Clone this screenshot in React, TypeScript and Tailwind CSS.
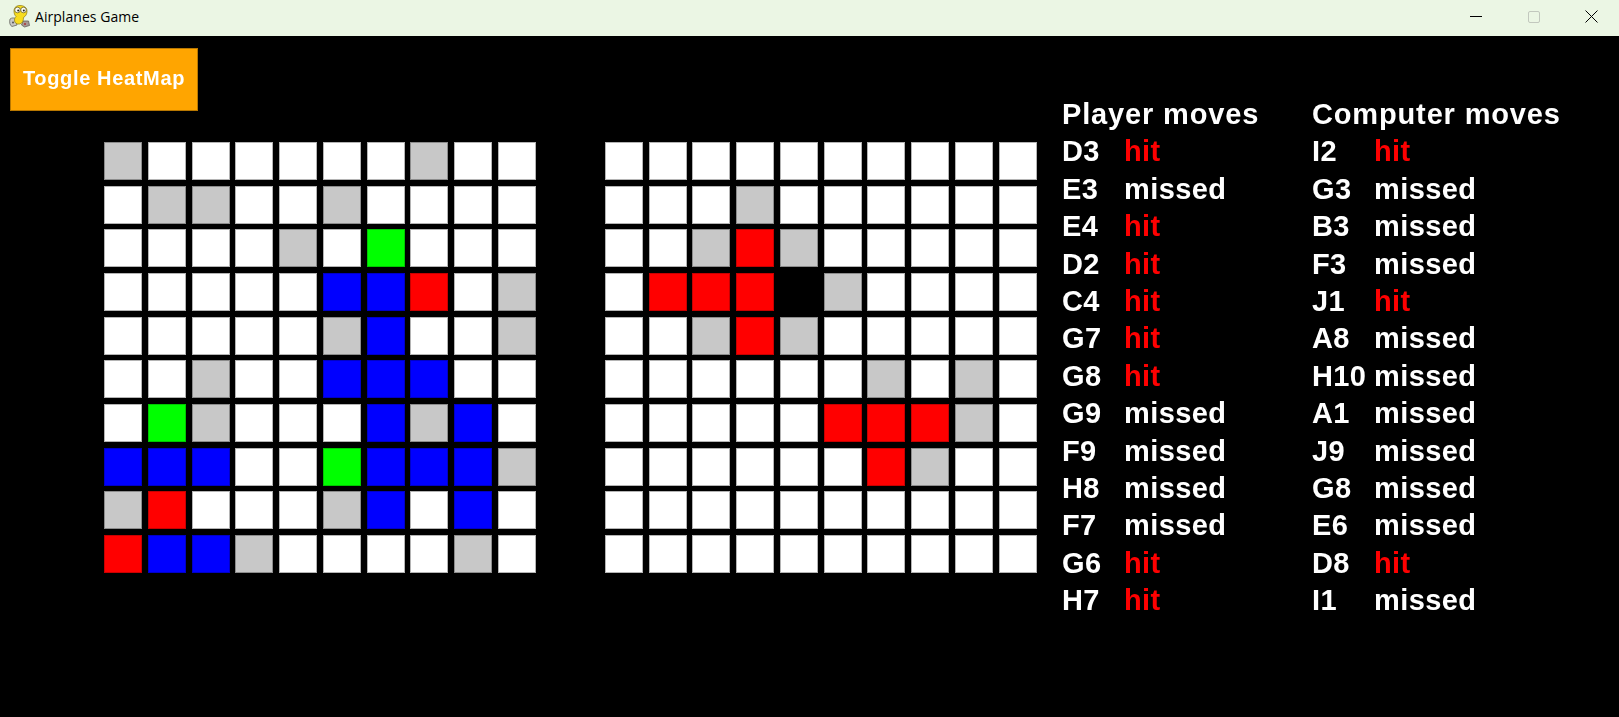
const PLAYER_BOARD = [
  "GWWWWWWGWW",
  "WGGWWGWWWW",
  "WWWWGWLWWW",
  "WWWWWBBRWG",
  "WWWWWGBWWG",
  "WWGWWBBBWW",
  "WLGWWWBGBW",
  "BBBWWLBBBG",
  "GRWWWGBWBW",
  "RBBGWWWWGW",
]

const COMPUTER_BOARD = [
  "WWWWWWWWWW",
  "WWWGWWWWWW",
  "WWGRGWWWWW",
  "WRRRKGWWWW",
  "WWGRGWWWWW",
  "WWWWWWGWGW",
  "WWWWWRRRGW",
  "WWWWWWRGWW",
  "WWWWWWWWWW",
  "WWWWWWWWWW",
]

const CELL_CLASS: Record<string, string> = {
  W: "bg-white border-[#b4b4b4]",
  G: "bg-[#c8c8c8] border-[#8c8c8c]",
  B: "bg-[#0000ff] border-[#0000c8]",
  R: "bg-[#ff0000] border-[#c80000]",
  L: "bg-[#00ff00] border-[#00c800]",
  K: "bg-black border-black",
}

const PLAYER_MOVES = [
  ["D3", "hit"], ["E3", "missed"], ["E4", "hit"], ["D2", "hit"], ["C4", "hit"], ["G7", "hit"], ["G8", "hit"],
  ["G9", "missed"], ["F9", "missed"], ["H8", "missed"], ["F7", "missed"], ["G6", "hit"], ["H7", "hit"],
]

const COMPUTER_MOVES = [
  ["I2", "hit"], ["G3", "missed"], ["B3", "missed"], ["F3", "missed"], ["J1", "hit"], ["A8", "missed"], ["H10", "missed"],
  ["A1", "missed"], ["J9", "missed"], ["G8", "missed"], ["E6", "missed"], ["D8", "hit"], ["I1", "missed"],
]

function SnakeIcon() {
  return (
    <svg width="21" height="23" viewBox="0 0 21 23">
      <path d="M1 14c2-1.500 4-1.500 6 0l1 6-5 1.500c-2-1-3-4-2-7.500z" fill="#c9c9c4" stroke="#55554f" strokeWidth="0.7" />
      <path d="M14 16h5.500l1 4.500-5 1.500-3-2z" fill="#a89a94" stroke="#55554f" strokeWidth="0.7" />
      <path d="M5 6c0-4 3-5.500 6-5.500s7 1.500 7 5.500c0 3-1 5-3.500 6.500 0 3-1 6-4 6.500-3 .5-5-1-5-4 0-1.500.5-2.500 1.500-3.500C5.500 10 5 8 5 6z" fill="#f7dc1e" stroke="#8a7a12" strokeWidth="0.7" />
      <circle cx="8.500" cy="5" r="2.800" fill="#fbfbf0" stroke="#5c5320" strokeWidth="0.7" />
      <circle cx="14.500" cy="5" r="2.800" fill="#fbfbf0" stroke="#5c5320" strokeWidth="0.7" />
      <circle cx="9.200" cy="5.400" r="1" fill="#222" />
      <circle cx="14.800" cy="5.400" r="1" fill="#222" />
      <circle cx="4" cy="17.500" r="1" fill="#555" />
      <circle cx="16" cy="19" r="1" fill="#a33" />
    </svg>
  )
}

function TitleBar() {
  return (
    <div className="h-9 flex items-center pb-[3px] bg-[#ebf6e4] text-black">
      <div className="w-[35px] pl-[9px] shrink-0">
        <SnakeIcon />
      </div>
      <span className="font-['Open_Sans',sans-serif] text-[14px] tracking-[0.05px]">Airplanes Game</span>
      <div className="ml-auto flex items-center">
        <div className="w-[58px] flex justify-center">
          <div className="w-3 h-px bg-black" />
        </div>
        <div className="w-[58px] flex justify-center">
          <div className="w-[12px] h-[12px] border border-[#c2c8be] rounded-[2px]" />
        </div>
        <div className="w-[56px] flex justify-center">
          <svg width="13" height="13" viewBox="0 0 13 13" stroke="black" strokeWidth="1">
            <path d="M0.5 0.5 12.5 12.5M12.5 0.5 0.5 12.5" />
          </svg>
        </div>
      </div>
    </div>
  )
}

function Board({ rows }: { rows: string[] }) {
  return (
    <div className="grid grid-cols-[repeat(10,38px)] gap-x-[5.78px] gap-y-[5.67px]">
      {rows.flatMap((row, y) =>
        row.split("").map((cell, x) => (
          <div key={`${y}-${x}`} className={`h-[38px] border ${CELL_CLASS[cell]}`} />
        ))
      )}
    </div>
  )
}

function MoveColumn({ title, moves }: { title: string; moves: string[][] }) {
  return (
    <div className="w-[250px] font-['Liberation_Sans',sans-serif] font-bold text-[29px] text-white tracking-[0.4px] blur-[0.4px]">
      <div className="h-[37.4px] leading-[37.4px] tracking-[0.85px]">{title}</div>
      {moves.map(([cell, result], i) => (
        <div key={i} className="h-[37.4px] leading-[37.4px] flex">
          <span className="w-[62px] shrink-0">{cell}</span>
          <span className={result === "hit" ? "text-[#ff0000]" : "text-white"}>{result}</span>
        </div>
      ))}
    </div>
  )
}

export default function App() {
  return (
    <div className="w-[1619px] h-[717px] bg-black overflow-hidden">
      <TitleBar />
      <div className="flex items-start">
        <div className="w-[1037px] shrink-0 pt-3 pl-2.5">
          <button className="w-[188px] h-[63px] pb-[3px] bg-[#ffa500] border border-[#b87700] text-white font-['Liberation_Sans',sans-serif] font-bold text-[20px] tracking-[0.65px] blur-[0.3px]">
            Toggle HeatMap
          </button>
          <div className="mt-[31px] pl-[94px] flex gap-[69px]">
            <Board rows={PLAYER_BOARD} />
            <Board rows={COMPUTER_BOARD} />
          </div>
        </div>
        <div className="ml-[25px] mt-[60px] flex">
          <MoveColumn title="Player moves" moves={PLAYER_MOVES} />
          <MoveColumn title="Computer moves" moves={COMPUTER_MOVES} />
        </div>
      </div>
    </div>
  )
}
